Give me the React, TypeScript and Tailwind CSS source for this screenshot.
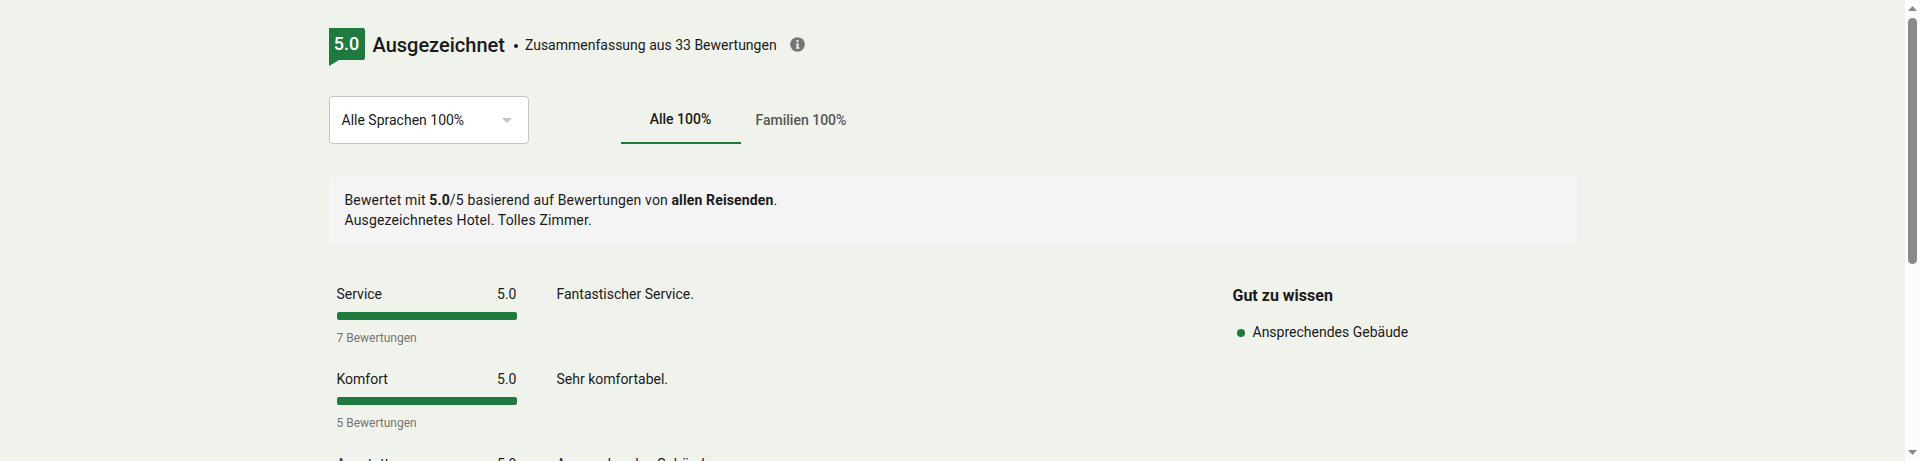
const rows = [
  { name: "Service", score: "5.0", count: "7 Bewertungen", text: "Fantastischer Service." },
  { name: "Komfort", score: "5.0", count: "5 Bewertungen", text: "Sehr komfortabel." },
  { name: "Ausstattung", score: "5.0", count: "4 Bewertungen", text: "Ansprechendes Gebäude." },
];

function ScoreBadge() {
  return (
    <div className="relative flex h-8 w-9 items-center justify-center rounded-tr-[2px] rounded-br-[2px] bg-[#1e7a3e] text-lg font-medium text-white">
      5.0
      <svg className="absolute left-0 top-8" width="10" height="6" viewBox="0 0 10 6">
        <path d="M0 0H10L0 6Z" fill="#1e7a3e" />
      </svg>
    </div>
  );
}

function InfoIcon() {
  return (
    <svg width="15" height="15" viewBox="0 0 14 14">
      <circle cx="7" cy="7" r="6.8" fill="#757575" />
      <rect x="6" y="2.8" width="2" height="2" rx="0.5" fill="#f0f2ec" />
      <path d="M5.4 6h2.7v3.7h0.8v1.2H5.4V9.7h0.8V7.2h-0.8Z" fill="#f0f2ec" />
    </svg>
  );
}

function RatingRow({ row }: { row: (typeof rows)[number] }) {
  return (
    <div className="flex h-[85px]">
      <div className="w-[180px]">
        <div className="flex h-5 justify-between text-sm leading-5 text-[#1a1a1a]">
          <span>{row.name}</span>
          <span>{row.score}</span>
        </div>
        <div className="mt-2 h-2 rounded-[2px] bg-[#1e7a3e]" />
        <div className="mt-2.5 text-xs leading-4 text-[#757575]">{row.count}</div>
      </div>
      <div className="ml-[40px] text-sm leading-5 text-[#1a1a1a]">{row.text}</div>
    </div>
  );
}

export default function App() {
  return (
    <div className="flex h-[461px] overflow-hidden bg-[#f0f2ec] font-['Roboto',sans-serif]">
      <main className="min-w-0 flex-1">
        <div className="mx-auto w-[1248px]">
          <div className="flex items-center pt-7">
            <ScoreBadge />
            <h2 className="ml-2 mt-[1px] text-xl font-medium leading-6 text-[#1a1a1a]">Ausgezeichnet</h2>
            <span className="mx-[7px] ml-[9px] mt-[3px] h-1 w-1 rounded-full bg-[#1a1a1a]" />
            <span className="mt-[2px] text-sm leading-5 text-[#1a1a1a]">Zusammenfassung aus 33 Bewertungen</span>
            <span className="ml-[13px] flex">
              <InfoIcon />
            </span>
          </div>

          <div className="mt-9 flex">
            <div className="flex h-12 w-[200px] items-center justify-between rounded-[4px] border border-[#c4c4c4] bg-white pl-3 pr-4 text-sm text-[#1a1a1a]">
              <span>Alle Sprachen 100%</span>
              <span className="h-0 w-0 border-x-[5px] border-t-[5px] border-x-transparent border-t-[#c4c4c4]" />
            </div>
            <div className="ml-[92px] flex h-12 text-sm font-medium">
              <div className="flex w-[120px] items-center justify-center border-b-2 border-[#1e7a3e] text-[#1a1a1a]">Alle 100%</div>
              <div className="flex items-center pl-[15px] text-[#555555]">Familien 100%</div>
            </div>
          </div>

          <div className="mt-8 h-[68px] rounded-[4px] bg-[#f4f4f4] px-4 py-[14px] text-sm leading-5 tracking-[0.14px] text-[#1a1a1a]">
            <p>
              Bewertet mit <b className="font-bold">5.0</b>/5 basierend auf Bewertungen von <b className="font-bold">allen Reisenden</b>.
            </p>
            <p>Ausgezeichnetes Hotel. Tolles Zimmer.</p>
          </div>

          <div className="mt-10 flex justify-between pl-2">
            <div>
              {rows.map((row) => (
                <RatingRow key={row.name} row={row} />
              ))}
            </div>
            <div className="w-[344px]">
              <h3 className="text-base font-bold leading-6 text-[#1a1a1a]">Gut zu wissen</h3>
              <div className="mt-[14px] flex items-center pl-1 text-sm leading-5 text-[#1a1a1a]">
                <span className="mt-[2px] h-2 w-2 rounded-full bg-[#1e7a3e]" />
                <span className="ml-2">Ansprechendes Gebäude</span>
              </div>
            </div>
          </div>
        </div>
      </main>

      <div className="flex h-full w-[15px] flex-col items-center bg-[#fcfcfc]">
        <svg className="mt-[6px]" width="9" height="5" viewBox="0 0 9 5">
          <path d="M4.5 0L9 5H0Z" fill="#8a8a8a" />
        </svg>
        <div className="mt-[7px] h-[246px] w-[9px] rounded-full bg-[#8a8a8a]" />
        <svg className="mb-[6px] mt-auto" width="9" height="5" viewBox="0 0 9 5">
          <path d="M0 0H9L4.5 5Z" fill="#8a8a8a" />
        </svg>
      </div>
    </div>
  );
}
